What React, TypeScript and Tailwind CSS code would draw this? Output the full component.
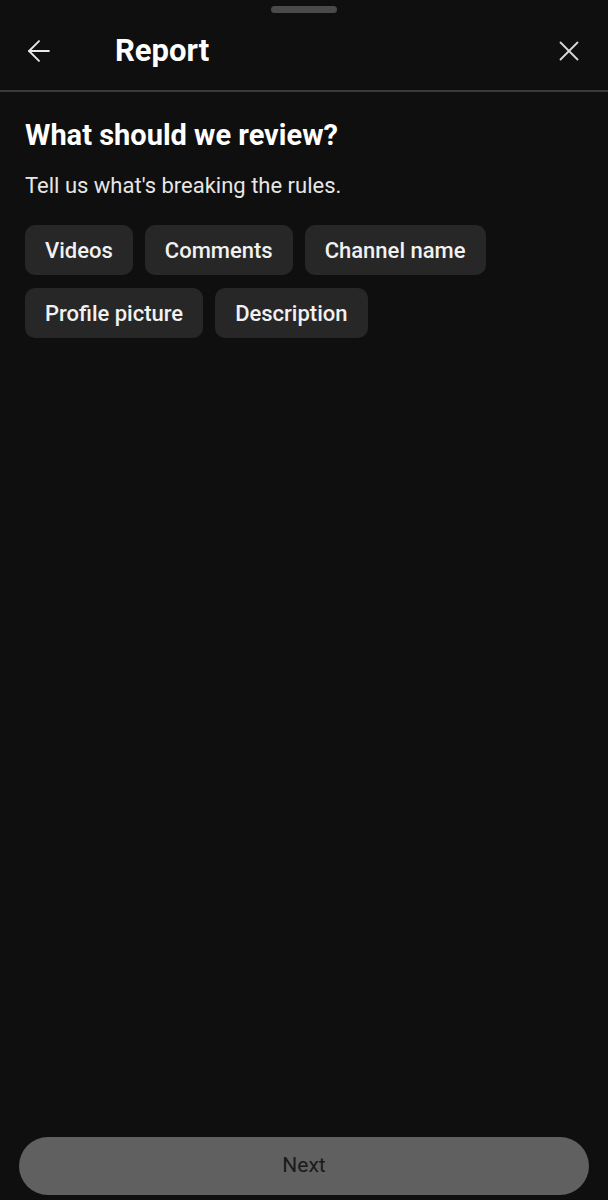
import { ArrowLeft, X } from "lucide-react";

const chips = ["Videos", "Comments", "Channel name", "Profile picture", "Description"];

export default function App() {
  return (
    <div
      className="flex h-[1200px] w-[608px] flex-col bg-[#0f0f0f] text-white"
      style={{ fontFamily: "Roboto, 'Noto Sans', sans-serif" }}
    >
      {/* drag handle */}
      <div className="flex justify-center pt-[6px]">
        <div className="h-[7px] w-[66px] rounded-full bg-[#4a4a4a]" />
      </div>

      {/* header */}
      <div className="flex h-[79px] items-center border-b-2 border-[#3a3a3a] pb-[2px]">
        <button className="ml-[22px] flex h-[34px] w-[34px] items-center justify-center text-[#e8e8e8]">
          <ArrowLeft size={34} strokeWidth={1.3} />
        </button>
        <h1 className="ml-[59px] text-[31px] font-bold leading-none">Report</h1>
        <button className="ml-auto mr-[22px] flex h-[34px] w-[34px] items-center justify-center text-[#d8d8d8]">
          <X size={34} strokeWidth={1.3} />
        </button>
      </div>

      <div className="px-[25px]">
        <h2 className="mt-[26px] text-[29px] font-bold leading-[34px]">What should we review?</h2>
        <p className="mt-[21px] text-[22px] leading-[26px] text-[#e6e6e6]">
          Tell us what's breaking the rules.
        </p>
        <div className="mt-[26px] flex flex-wrap gap-x-[12px] gap-y-[13px]">
          {chips.map((c) => (
            <button
              key={c}
              className="h-[50px] rounded-[10px] bg-[#272727] px-[20px] text-[22px] font-medium text-[#f1f1f1]"
            >
              {c}
            </button>
          ))}
        </div>
      </div>

      <div className="mt-auto px-[19px] pb-[5px]">
        <button className="h-[58px] w-full rounded-full bg-[#606060] text-[21px] text-[#1a1a1a]">
          Next
        </button>
      </div>
    </div>
  );
}
